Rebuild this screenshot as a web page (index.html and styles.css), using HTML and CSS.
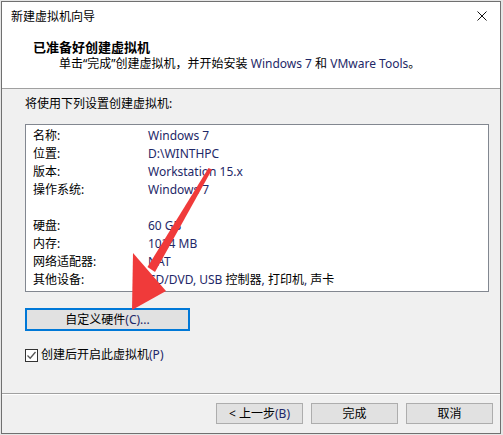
FILE: index.html
```html
<!DOCTYPE html>
<html lang="zh-CN">
<head>
<meta charset="utf-8">
<title>新建虚拟机向导</title>
<link rel="stylesheet" href="styles.css">
</head>
<body>
<div class="window">
  <div class="titlebar">
    <span class="title">新建虚拟机向导</span>
    <svg class="close" width="10" height="10" viewBox="0 0 10 10"><path d="M0.5 0.5 L9.5 9.5 M9.5 0.5 L0.5 9.5" stroke="#111" stroke-width="1" fill="none"/></svg>
  </div>
  <div class="header">
    <div class="head-title">已准备好创建虚拟机</div>
    <div class="head-sub">单击“完成”创建虚拟机，并开始安装 <span class="lat">Windows 7</span> 和 <span class="lat">VMware Tools</span>。</div>
  </div>
  <div class="content">
    <div class="intro">将使用下列设置创建虚拟机:</div>
    <div class="listbox">
      <div class="row"><span class="lbl">名称:</span><span class="val lat">Windows 7</span></div>
      <div class="row"><span class="lbl">位置:</span><span class="val lat">D:\WINTHPC</span></div>
      <div class="row"><span class="lbl">版本:</span><span class="val lat">Workstation 15.x</span></div>
      <div class="row"><span class="lbl">操作系统:</span><span class="val lat">Windows 7</span></div>
      <div class="row"></div>
      <div class="row"><span class="lbl">硬盘:</span><span class="val lat">60 GB</span></div>
      <div class="row"><span class="lbl">内存:</span><span class="val lat">1024 MB</span></div>
      <div class="row"><span class="lbl">网络适配器:</span><span class="val lat">NAT</span></div>
      <div class="row"><span class="lbl">其他设备:</span><span class="val"><span class="lat">CD/DVD, USB</span> 控制器<span class="lat">,</span> 打印机<span class="lat">,</span> 声卡</span></div>
    </div>
    <button class="btn custom">自定义硬件<span class="lat">(C)...</span></button>
    <label class="check-row"><span class="checkbox"><svg width="11" height="11" viewBox="0 0 11 11"><path d="M1.5 5.5 L4.2 8.2 L9.5 2" stroke="#555" stroke-width="1.3" fill="none"/></svg></span><span>创建后开启此虚拟机<span class="lat">(P)</span></span></label>
  </div>
  <div class="footer">
    <button class="btn">&lt; 上一步<span class="lat">(B)</span></button>
    <button class="btn">完成</button>
    <button class="btn">取消</button>
  </div>
</div>
<svg class="arrow" width="503" height="435" viewBox="0 0 503 435">
  <polygon points="208.5,168 212,169.5 155,272 147.5,267" fill="#f03a3a"/>
  <polygon points="133,253 166,291 132,310" fill="#f03a3a"/>
</svg>
</body>
</html>
```

FILE: styles.css
```css
* { box-sizing: border-box; }
html, body { margin: 0; padding: 0; }
body {
  width: 503px;
  height: 435px;
  background: #e6e6e6;
  font-family: "Noto Sans", "Noto Sans CJK SC", sans-serif;
  font-size: 12px;
  color: #000;
  position: relative;
  overflow: hidden;
}
.window {
  margin: 1px 0 0 1px;
  width: 500px;
  height: 433px;
  border: 1px solid #707070;
  background: #f0f0f0;
  display: flex;
  flex-direction: column;
}
.titlebar {
  height: 30px;
  background: #fff;
  display: flex;
  align-items: center;
  justify-content: space-between;
  padding: 0 13px 0 9px;
}
.title { line-height: 30px; }
.close { display: block; margin-top: -2px; }
.header {
  background: #fff;
  padding: 7px 0 16px 31px;
  border-bottom: 1px solid #a0a0a0;
}
.head-title {
  font-weight: bold;
  font-size: 13px;
  line-height: 17px;
}
.head-sub {
  line-height: 16px;
  padding-left: 26px;
}
.lat { color: #1e2868; }
.content {
  flex: 1;
  padding: 7px 0 0 23px;
  display: flex;
  flex-direction: column;
  align-items: flex-start;
}
.intro { line-height: 16px; }
.listbox {
  margin-top: 12px;
  width: 464px;
  height: 168px;
  border: 1px solid #828790;
  background: #fff;
  padding: 2px 0 0 7px;
}
.row {
  height: 18px;
  line-height: 18px;
  display: flex;
}
.lbl { width: 115px; flex: none; }
.btn {
  font-family: inherit;
  font-size: 12px;
  color: #000;
  background: #e1e1e1;
  border: 1px solid #adadad;
  width: 87px;
  height: 21px;
  padding: 0;
  line-height: 19px;
}
.custom {
  margin-top: 16px;
  width: 165px;
  height: 23px;
  border: 2px solid #0078d7;
}
.check-row {
  margin-top: 16px;
  display: flex;
  align-items: center;
  line-height: 16px;
  gap: 3px;
}
.checkbox {
  width: 13px;
  height: 13px;
  border: 1px solid #333;
  background: #fff;
  display: flex;
  align-items: center;
  justify-content: center;
}
.checkbox svg { display: block; }
.footer {
  height: 40px;
  border-top: 1px solid #a0a0a0;
  box-shadow: inset 0 1px 0 #fff;
  display: flex;
  justify-content: flex-end;
  align-items: flex-start;
  gap: 8px;
  padding: 9px 7px 0 0;
}
.arrow {
  position: absolute;
  left: 0;
  top: 0;
  pointer-events: none;
}
```
